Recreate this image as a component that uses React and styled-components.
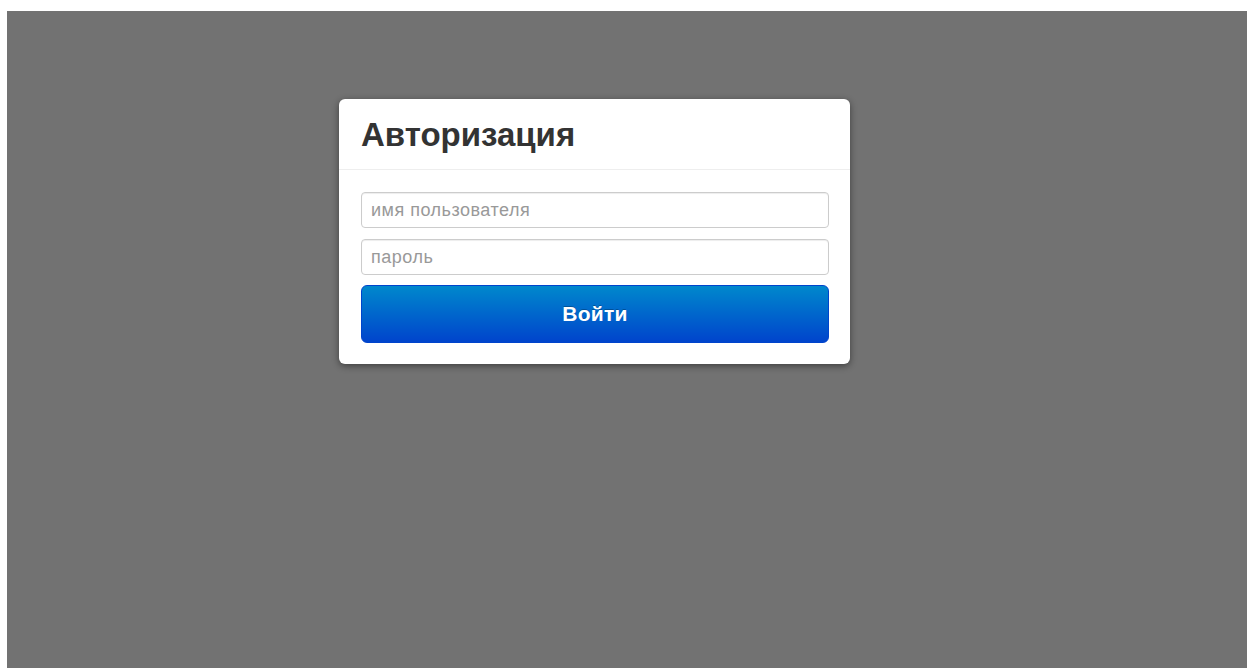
import React from 'react';
import styled, { createGlobalStyle } from 'styled-components';

const GlobalStyle = createGlobalStyle`
  html, body {
    margin: 0;
    padding: 0;
    background: #ffffff;
    font-family: "Liberation Sans", Arial, sans-serif;
  }
`;

const Backdrop = styled.div`
  margin: 11px 0 0 7px;
  min-height: 657px;
  background: #727272;
  padding-top: 88px;
  box-sizing: border-box;
`;

const Card = styled.div`
  width: 511px;
  margin-left: 332px;
  background: #ffffff;
  border-radius: 6px;
  box-shadow: 0 2px 7px rgba(0, 0, 0, 0.45);
  overflow: hidden;
`;

const Header = styled.div`
  height: 71px;
  padding: 0 22px;
  display: flex;
  align-items: center;
  border-bottom: 1px solid #eeeeee;
  box-sizing: border-box;
`;

const Title = styled.h3`
  margin: 0;
  font-size: 33px;
  font-weight: bold;
  color: #333333;
  line-height: 1;
`;

const Form = styled.form`
  display: flex;
  flex-direction: column;
  gap: 11px;
  padding: 22px 21px 21px 22px;
`;

const Input = styled.input`
  height: 36px;
  padding: 0 9px;
  border: 1px solid #cccccc;
  border-radius: 4px;
  box-shadow: inset 0 1px 1px rgba(0, 0, 0, 0.075);
  font-family: inherit;
  font-size: 18px;
  letter-spacing: 0.5px;
  color: #555555;
  box-sizing: border-box;
  outline: none;

  &::placeholder {
    color: #999999;
  }
`;

const Button = styled.button`
  height: 58px;
  border: 1px solid #0044cc;
  border-radius: 6px;
  background: linear-gradient(to bottom, #0088cc, #0044cc);
  color: #ffffff;
  font-family: inherit;
  font-size: 21px;
  font-weight: bold;
  letter-spacing: 0.3px;
  text-shadow: 0 -1px 0 rgba(0, 0, 0, 0.25);
  cursor: pointer;
  margin-top: -1px;
`;

const App = () => (
  <>
    <GlobalStyle />
    <Backdrop>
      <Card>
        <Header>
          <Title>Авторизация</Title>
        </Header>
        <Form onSubmit={e => e.preventDefault()}>
          <Input placeholder="имя пользователя" />
          <Input type="password" placeholder="пароль" />
          <Button type="submit">Войти</Button>
        </Form>
      </Card>
    </Backdrop>
  </>
);

export default App;
